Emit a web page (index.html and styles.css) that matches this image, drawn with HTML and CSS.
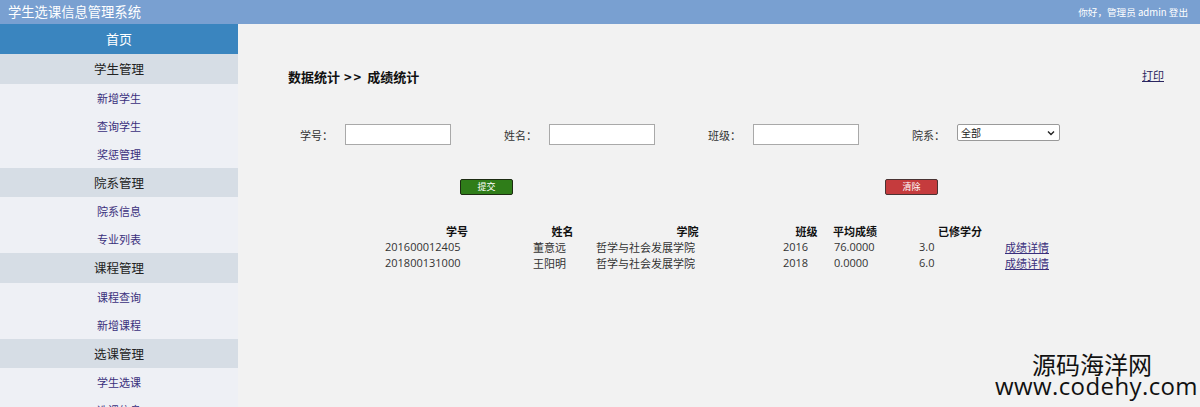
FILE: index.html
```html
<!DOCTYPE html>
<html lang="zh-CN">
<head>
<meta charset="utf-8">
<title>学生选课信息管理系统</title>
<link rel="stylesheet" href="styles.css">
</head>
<body>
<header class="topbar">
  <div class="brand">学生选课信息管理系统</div>
  <div class="greet">你好，管理员 admin 登出</div>
</header>
<div class="layout">
  <nav class="sidebar">
    <div class="home">首页</div>
    <div class="group">学生管理</div>
    <a class="item">新增学生</a>
    <a class="item">查询学生</a>
    <a class="item">奖惩管理</a>
    <div class="group">院系管理</div>
    <a class="item">院系信息</a>
    <a class="item">专业列表</a>
    <div class="group">课程管理</div>
    <a class="item">课程查询</a>
    <a class="item">新增课程</a>
    <div class="group">选课管理</div>
    <a class="item">学生选课</a>
    <a class="item">选课信息</a>
  </nav>
  <main class="main">
    <div class="titlebar">
      <h1 class="crumb">数据统计 <span class="sep">&gt;&gt;</span> 成绩统计</h1>
      <a class="print">打印</a>
    </div>
    <div class="filters">
      <div class="field"><span class="label">学号：</span><input class="text" type="text"></div>
      <div class="field"><span class="label">姓名：</span><input class="text" type="text"></div>
      <div class="field"><span class="label">班级：</span><input class="text" type="text"></div>
      <div class="field"><span class="label">院系：</span>
        <div class="select"><span>全部</span>
          <svg width="8" height="6" viewBox="0 0 8 6"><path d="M1 1.5 L4 4.5 L7 1.5" fill="none" stroke="#222" stroke-width="1.4"/></svg>
        </div>
      </div>
    </div>
    <div class="actions">
      <button class="btn submit">提交</button>
      <button class="btn clear">清除</button>
    </div>
    <div class="grid">
      <div class="th c1">学号</div><div class="th c2">姓名</div><div class="th c3">学院</div><div class="th c4">班级</div><div class="th c5">平均成绩</div><div class="th c6">已修学分</div><div class="th c7"></div>
      <div class="td c1">201600012405</div><div class="td c2">董意远</div><div class="td c3">哲学与社会发展学院</div><div class="td c4">2016</div><div class="td c5">76.0000</div><div class="td c6">3.0</div><div class="td c7"><a class="link">成绩详情</a></div>
      <div class="td c1">201800131000</div><div class="td c2">王阳明</div><div class="td c3">哲学与社会发展学院</div><div class="td c4">2018</div><div class="td c5">0.0000</div><div class="td c6">6.0</div><div class="td c7"><a class="link">成绩详情</a></div>
    </div>
  </main>
</div>
<div class="watermark">
  <div class="wm-cn">源码海洋网</div>
  <div class="wm-en">www.codehy.com</div>
</div>
</body>
</html>
```

FILE: styles.css
```css
* { box-sizing: border-box; }
html, body { margin: 0; padding: 0; }
body {
  width: 1200px;
  height: 407px;
  overflow: hidden;
  background: #f2f2f2;
  font-family: "Noto Sans CJK SC", "Noto Sans", sans-serif;
  color: #222;
  position: relative;
}
.topbar {
  height: 24px;
  background: #79a0d1;
  display: flex;
  align-items: center;
  justify-content: space-between;
  padding: 0 12px 0 8px;
  color: #fff;
}
.brand { font-size: 13.3px; line-height: 24px; }
.greet { font-size: 9.6px; line-height: 24px; }
.layout { display: flex; height: 383px; }
.sidebar {
  width: 238px;
  flex: none;
  background: #eef0f5;
  display: flex;
  flex-direction: column;
  overflow: hidden;
}
.home {
  height: 30px;
  flex: none;
  background: #3a85bf;
  color: #fff;
  font-size: 13px;
  line-height: 30px;
  text-align: center;
}
.group {
  height: 29.5px;
  flex: none;
  background: #d6dde5;
  color: #222;
  font-size: 12.5px;
  line-height: 29.5px;
  text-align: center;
}
.item {
  height: 28px;
  flex: none;
  color: #3a2f7c;
  font-size: 11px;
  line-height: 28px;
  text-align: center;
}
.main {
  flex: 1;
  padding: 45px 36px 0 50px;
}
.titlebar {
  display: flex;
  justify-content: space-between;
  align-items: center;
  height: 16px;
}
.crumb {
  margin: 0;
  font-size: 13px;
  font-weight: bold;
  line-height: 16px;
  color: #111;
}
.sep { letter-spacing: 2px; padding: 0 1px; }
.print {
  font-size: 11px;
  color: #2b2660;
  text-decoration: underline;
  margin-top: -4px;
}
.filters {
  display: grid;
  grid-template-columns: repeat(4, 204px);
  margin-top: 39px;
  margin-left: 2px;
}
.field {
  display: flex;
  align-items: center;
  padding-left: 10px;
  height: 21px;
}
.label {
  width: 45px;
  font-size: 11px;
  color: #333;
}
.text {
  width: 106px;
  height: 21px;
  border: 1px solid #a9a9a9;
  background: #fff;
  padding: 0;
  margin: 0;
}
.select {
  width: 103px;
  height: 17px;
  margin-top: -4px;
  border: 1px solid #9a9a9a;
  border-radius: 2px;
  background: #fff;
  display: flex;
  align-items: center;
  justify-content: space-between;
  padding: 0 4px 0 3px;
  font-size: 10px;
  color: #222;
}
.actions {
  display: flex;
  margin-top: 34px;
  padding-left: 172px;
  gap: 372px;
}
.btn {
  width: 53px;
  height: 16px;
  padding: 0;
  border-radius: 2px;
  color: #fff;
  font-family: "Noto Sans CJK SC", sans-serif;
  font-size: 9px;
  line-height: 14px;
}
.submit { background: #2f7d19; border: 1px solid #1d2b12; }
.clear { background: #c53b3d; border: 1px solid #4a3333; }
.grid {
  display: grid;
  grid-template-columns: 148px 63px 187px 51px 46px 124px 48px;
  grid-auto-rows: 16px;
  margin-top: 28px;
  margin-left: 95px;
  font-size: 11px;
  line-height: 16px;
}
.th { font-weight: bold; color: #111; text-align: center; }
.td { color: #333; padding-left: 2px; font-family: "Open Sans", "Noto Sans CJK SC", sans-serif; }
.td.c2, .td.c3 { font-family: "Noto Sans CJK SC", sans-serif; }
.th.c6 { padding-left: 40px; }
.td.c6 { padding-left: 41px; }
.td.c7 { padding-left: 3px; }
.link { color: #3a2f7c; text-decoration: underline; font-family: "Noto Sans CJK SC", sans-serif; }
.watermark {
  position: absolute;
  left: 995px;
  top: 353px;
  width: 205px;
  color: #111;
  display: flex;
  flex-direction: column;
}
.wm-cn { font-size: 24px; line-height: 22px; padding-left: 37px; }
.wm-en { font-family: "Open Sans", sans-serif; font-size: 24px; line-height: 22px; letter-spacing: 0.4px; white-space: nowrap; }
```
